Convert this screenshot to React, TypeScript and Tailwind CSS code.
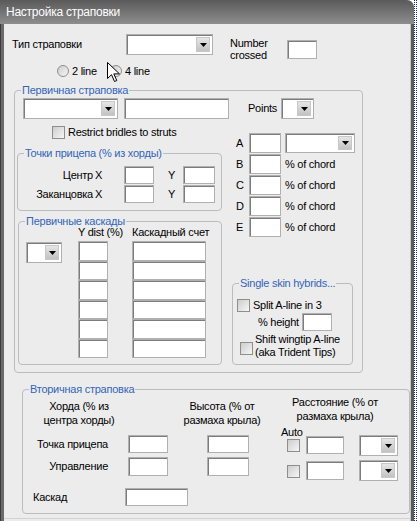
import type { ReactNode } from 'react'

// Sunken edit field
function Field({ className = '' }: { className?: string }) {
  return <div className={`shrink-0 bg-white border border-[#b0b0b0] shadow-[inset_1px_1px_0_#7c7c7c] ${className}`} />
}

// Combo box with the drop button on the right
function Combo({ className = '' }: { className?: string }) {
  return (
    <div className={`relative shrink-0 bg-white border border-[#b0b0b0] shadow-[inset_1px_1px_0_#7c7c7c] ${className}`}>
      <div className="absolute right-[2px] top-[2px] bottom-[2px] w-[14px] bg-gradient-to-b from-[#e6e6e6] to-[#c2c2c2] border border-[#c8c8c8] flex items-center justify-center">
        <svg width="7" height="4" viewBox="0 0 7 4">
          <path d="M0 0h7L3.5 4z" fill="#000" />
        </svg>
      </div>
    </div>
  )
}

function Check({ className = '' }: { className?: string }) {
  return <div className={`shrink-0 w-[13px] h-[13px] border border-[#8e8e8e] bg-gradient-to-br from-[#cdcdcd] to-[#f6f6f6] ${className}`} />
}

function Radio() {
  return <div className="shrink-0 w-[12px] h-[12px] rounded-full border border-[#8e8e8e] bg-gradient-to-br from-[#cdcdcd] to-[#f6f6f6]" />
}

function Group({ title, className = '', children }: { title: string; className?: string; children?: ReactNode }) {
  return (
    <div className={`relative shrink-0 border border-[#bcbcbc] rounded-[4px] ${className}`}>
      <span className="absolute left-[6px] top-[-7px] px-[1px] bg-[#ececec] leading-[13px] whitespace-nowrap text-[#3264b8]">
        {title}
      </span>
      {children}
    </div>
  )
}

const chordRows = ['B', 'C', 'D', 'E']
const cascadeRows = [0, 1, 2, 3, 4, 5]

export default function App() {
  return (
    <div className="relative w-[417px] h-[521px] flex overflow-hidden bg-white font-['Liberation_Sans',Arial,sans-serif] text-[11px] tracking-[-0.25px] leading-[13px] text-black">
      <div className="w-[414px] flex flex-col">
        {/* title bar */}
        <div className="h-[24px] shrink-0 rounded-tr-[7px] bg-gradient-to-b from-[#5a5a5a] to-[#8e8e8e] pl-[6px] pt-[1px] text-[12px] leading-[23px] text-white">
          Настройка страповки
        </div>

        <div className="flex flex-1 min-h-0">
          <div className="w-[4px] bg-[#6a6a6a] border-l border-[#3c3c3c]" />

          <div className="w-[406px] bg-[#ececec] flex flex-col items-start overflow-hidden">
            {/* type row */}
            <div className="mt-[10px] ml-[8px] flex items-start">
              <div className="w-[114px] h-[21px] flex items-center">Тип страповки</div>
              <Combo className="w-[87px] h-[21px]" />
              <div className="ml-[17px] w-[57px] pt-[3px] leading-[12px]">
                Number
                <br />
                crossed
              </div>
              <Field className="mt-[6px] w-[30px] h-[19px]" />
            </div>

            <div className="mt-[4px] ml-[53px] h-[12px] flex items-center">
              <Radio />
              <span className="ml-[3px] w-[38px]">2 line</span>
              <Radio />
              <span className="ml-[3px]">4 line</span>
            </div>

            {/* primary bridle */}
            <Group title="Первичная страповка" className="mt-[13px] ml-[10px] w-[349px] pb-[7px]">
              <div className="mt-[7px] ml-[8px] flex items-start">
                <Combo className="w-[95px] h-[21px]" />
                <Field className="ml-[6px] w-[105px] h-[21px]" />
                <div className="ml-[19px] w-[33px] h-[21px] flex items-center">Points</div>
                <Combo className="w-[33px] h-[21px]" />
              </div>

              <div className="flex items-start">
                <div className="w-[217px] flex flex-col items-start">
                  <div className="mt-[7px] ml-[37px] h-[13px] flex items-center">
                    <Check />
                    <span className="ml-[3px]">Restrict bridles to struts</span>
                  </div>

                  <Group title="Точки прицепа (% из хорды)" className="mt-[14px] ml-[2px] w-[205px] pt-[12px] pb-[7px]">
                    <div className="flex flex-col gap-[1px]">
                      {[
                        ['Центр', 'X'],
                        ['Заканцовка', 'X'],
                      ].map(([name, axis]) => (
                        <div key={name} className="h-[18px] flex items-center">
                          <span className="w-[75px] text-right">{name}</span>
                          <span className="ml-[2px] w-[9px]">{axis}</span>
                          <Field className="ml-[20px] w-[30px] h-[18px]" />
                          <span className="ml-[14px] w-[15px]">Y</span>
                          <Field className="w-[32px] h-[18px]" />
                        </div>
                      ))}
                    </div>
                  </Group>

                  <Group title="Первичные каскады" className="mt-[10px] ml-[3px] w-[204px] pb-[6px]">
                    <div className="mt-[4px] ml-[59px] flex">
                      <span className="w-[54px]">Y dist (%)</span>
                      <span>Каскадный счет</span>
                    </div>
                    <div className="mt-[2px] flex items-start">
                      <Combo className="mt-[1px] ml-[7px] w-[36px] h-[21px]" />
                      <div className="ml-[16px] flex flex-col">
                        {cascadeRows.map((r) => (
                          <Field key={r} className="w-[30px] h-[19.5px]" />
                        ))}
                      </div>
                      <div className="ml-[24px] flex flex-col">
                        {cascadeRows.map((r) => (
                          <Field key={r} className="w-[74px] h-[19.5px]" />
                        ))}
                      </div>
                    </div>
                  </Group>
                </div>

                <div className="flex flex-col items-start">
                  <div className="mt-[14px] pl-[4px] flex flex-col gap-[1px]">
                    <div className="h-[20px] flex items-center">
                      <span className="w-[13px]">A</span>
                      <Field className="w-[32px] h-[20px]" />
                      <Combo className="ml-[4px] w-[70px] h-[20px]" />
                    </div>
                    {chordRows.map((l) => (
                      <div key={l} className="h-[20px] flex items-center">
                        <span className="w-[13px]">{l}</span>
                        <Field className="w-[32px] h-[20px]" />
                        <span className="ml-[4px]">% of chord</span>
                      </div>
                    ))}
                  </div>

                  <Group title="Single skin hybrids..." className="mt-[46px] w-[121px] pb-[5px]">
                    <div className="mt-[15px] ml-[4px] h-[13px] flex items-center">
                      <Check />
                      <span className="ml-[3px]">Split A-line in 3</span>
                    </div>
                    <div className="mt-[1px] ml-[25px] h-[18px] flex items-center">
                      <span className="w-[44px]">% height</span>
                      <Field className="w-[30px] h-[18px]" />
                    </div>
                    <div className="flex items-start">
                      <Check className="mt-[11px] ml-[7px]" />
                      <div className="mt-[2px] ml-[2px]">
                        Shift wingtip A-line
                        <br />
                        (aka Trident Tips)
                      </div>
                    </div>
                  </Group>
                </div>
              </div>
            </Group>

            {/* secondary bridle */}
            <Group title="Вторичная страповка" className="mt-[16px] ml-[18px] w-[388px] pb-[7px]">
              <div className="mt-[9px] flex items-start leading-[14px]">
                <div className="ml-[10px] w-[92px] text-center">
                  Хорда (% из
                  <br />
                  центра хорды)
                </div>
                <div className="ml-[55px] w-[84px] text-center">
                  Высота (% от
                  <br />
                  размаха крыла)
                </div>
                <div className="-mt-[4px] ml-[28px] w-[86px] text-center">
                  Расстояние (% от
                  <br />
                  размаха крыла)
                </div>
              </div>
              <div className="ml-[258px] leading-[10px]">Auto</div>

              <div className="-mt-[2px] flex items-start">
                <div className="ml-[10px] w-[75px] h-[18px] flex items-center justify-end">Точка прицепа</div>
                <Field className="ml-[20px] w-[40px] h-[18px]" />
                <Field className="ml-[39px] w-[42px] h-[18px]" />
                <Check className="mt-[4px] ml-[38px]" />
                <Field className="mt-[1px] ml-[6px] w-[38px] h-[18px]" />
                <Combo className="ml-[15px] w-[39px] h-[21px]" />
              </div>

              <div className="mt-[1px] flex items-start">
                <div className="ml-[10px] w-[75px] h-[19px] flex items-center justify-end">Управление</div>
                <Field className="ml-[20px] w-[40px] h-[19px]" />
                <Field className="ml-[39px] w-[42px] h-[19px]" />
                <Check className="mt-[8px] ml-[38px]" />
                <Field className="mt-[4px] ml-[6px] w-[38px] h-[19px]" />
                <Combo className="mt-[3px] ml-[15px] w-[39px] h-[21px]" />
              </div>

              <div className="mt-[7px] flex items-center">
                <div className="ml-[10px] w-[92px]">Каскад</div>
                <Field className="w-[63px] h-[18px]" />
              </div>
            </Group>

            <div className="mt-[4px] w-full h-[1px] shrink-0 bg-[#d2d2d2]" />
          </div>

          <div className="w-[4px] bg-[#5a5a5a] border-l border-[#c4c4c4]" />
        </div>
      </div>

      <div className="w-[3px] bg-white border-x border-dotted border-[#1c2a7a]" />

      {/* mouse pointer */}
      <svg className="absolute left-[107px] top-[62px]" width="13" height="21" viewBox="0 0 13 21">
        <path d="M0.5 0.5v16l4-3.8 3 6.8 2.3-1-3-6.6h5.7z" fill="#fff" stroke="#000" strokeWidth="1" strokeLinejoin="miter" />
      </svg>
    </div>
  )
}
